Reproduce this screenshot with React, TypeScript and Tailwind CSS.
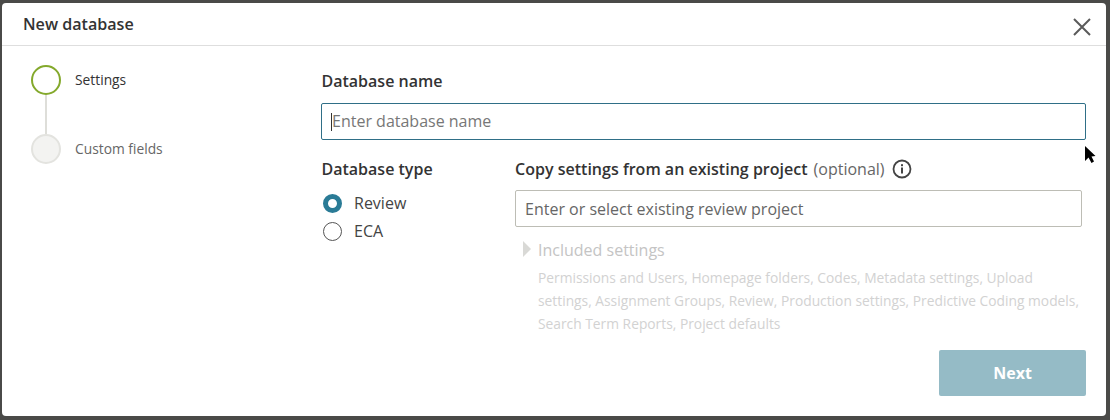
import React from "react";

export default function App() {
  return (
    <div className="w-[1110px] h-[420px] bg-[#4a4a48] pt-[3px] pb-[4px] pr-[4px] pl-[2px] overflow-hidden font-['Open_Sans',sans-serif]">
      <div className="relative h-full bg-white rounded-[4px] flex flex-col">
        <div className="h-[43px] flex items-center justify-between border-b border-[#dedede] shrink-0 pl-[21px] pr-[15px]">
          <div className="text-[16.1px] font-semibold text-[#333]">New database</div>
          <svg width="18" height="18" viewBox="0 0 18 18" className="mt-[5px]">
            <path d="M1 1L17 17M17 1L1 17" stroke="#5a5a5a" strokeWidth="2" fill="none" />
          </svg>
        </div>
        <div className="flex flex-1 min-h-0">
          <div className="w-[320px] pl-[29px] pt-[19px] shrink-0">
            <div className="flex items-center gap-[14px]">
              <div className="w-[30px] h-[30px] rounded-full border-2 border-[#84a92c] bg-white"></div>
              <div className="text-[13.8px] text-[#333]">Settings</div>
            </div>
            <div className="w-[2px] h-[39px] bg-[#deded9] ml-[14px]"></div>
            <div className="flex items-center gap-[14px]">
              <div className="w-[30px] h-[30px] rounded-full border-2 border-[#e3e3df] bg-[#f3f3f1]"></div>
              <div className="text-[13.8px] text-[#666]">Custom fields</div>
            </div>
          </div>
          <div className="flex-1 min-w-0 pr-[20px] pt-[24px] flex flex-col">
            <div className="text-[16px] font-semibold text-[#333] leading-[22px] -ml-[0.5px]">Database name</div>
            <div className="mt-[11px] -ml-px h-[37px] border border-[#2f6f87] rounded-[2px] flex items-center pl-[9px] pb-[1px] text-[16px] text-[#777]">
              <span className="w-px h-[18px] bg-[#333] mt-[1px]"></span>Enter database name
            </div>
            <div className="flex mt-[18px]">
              <div className="w-[193px] shrink-0">
                <div className="text-[16px] font-semibold text-[#333] leading-[22px] -ml-[0.5px]">Database type</div>
                <div className="mt-[9px] flex items-center gap-[12px] h-[28px] pl-[1px]">
                  <div className="w-[19px] h-[19px] rounded-full border-[5px] border-[#2a7b96] bg-white"></div>
                  <div className="text-[16px] text-[#444]">Review</div>
                </div>
                <div className="flex items-center gap-[12px] h-[28px] pl-[1px]">
                  <div className="w-[19px] h-[19px] rounded-full border border-[#555] bg-white"></div>
                  <div className="text-[16px] text-[#444]">ECA</div>
                </div>
              </div>
              <div className="flex-1 min-w-0">
                <div className="flex items-center leading-[22px] text-[16px]">
                  <span className="font-semibold text-[#333] text-[16.05px]">Copy settings from an existing project</span>
                  <span className="ml-[6px] text-[#666]">(optional)</span>
                  <svg width="20" height="20" viewBox="0 0 20 20" className="ml-[7px]">
                    <circle cx="10" cy="10" r="8.5" stroke="#444" strokeWidth="1.8" fill="none" />
                    <rect x="9" y="8.5" width="2" height="6" fill="#444" />
                    <rect x="9" y="5.2" width="2" height="2" fill="#444" />
                  </svg>
                </div>
                <div className="mt-[10px] mr-[4px] h-[37px] border border-[#bdbdb5] rounded-[2px] flex items-center pl-[9px] text-[16px] text-[#666]">
                  Enter or select existing review project
                </div>
                <div className="flex items-center mt-[12px] h-[22px]">
                  <svg width="10" height="16" viewBox="0 0 10 16" className="ml-[7px] -mt-[3px]">
                    <path d="M1 0L9 8L1 16Z" fill="#d9d9d6" />
                  </svg>
                  <span className="ml-[6px] text-[16px] text-[#c4c4c4]">Included settings</span>
                </div>
                <div className="mt-[5px] ml-[23px] text-[13.8px] leading-[23px] text-[#d2d2d2]">
                  Permissions and Users, Homepage folders, Codes, Metadata settings, Upload settings, Assignment Groups, Review, Production settings, Predictive Coding models, Search Term Reports, Project defaults
                </div>
              </div>
            </div>
            <div className="flex justify-end mt-[15px]">
              <div className="w-[147px] h-[46px] bg-[#95bbc6] rounded-[2px] flex items-center justify-center text-white text-[16px] font-bold">Next</div>
            </div>
          </div>
        </div>
        <svg width="12" height="18" viewBox="0 0 12 18" className="absolute left-[1082px] top-[143px]">
          <path d="M1 0L1 15L4.5 11.5L7.5 17L10 15.5L7.5 10.5L11.5 10Z" fill="#000" />
        </svg>
      </div>
    </div>
  );
}
